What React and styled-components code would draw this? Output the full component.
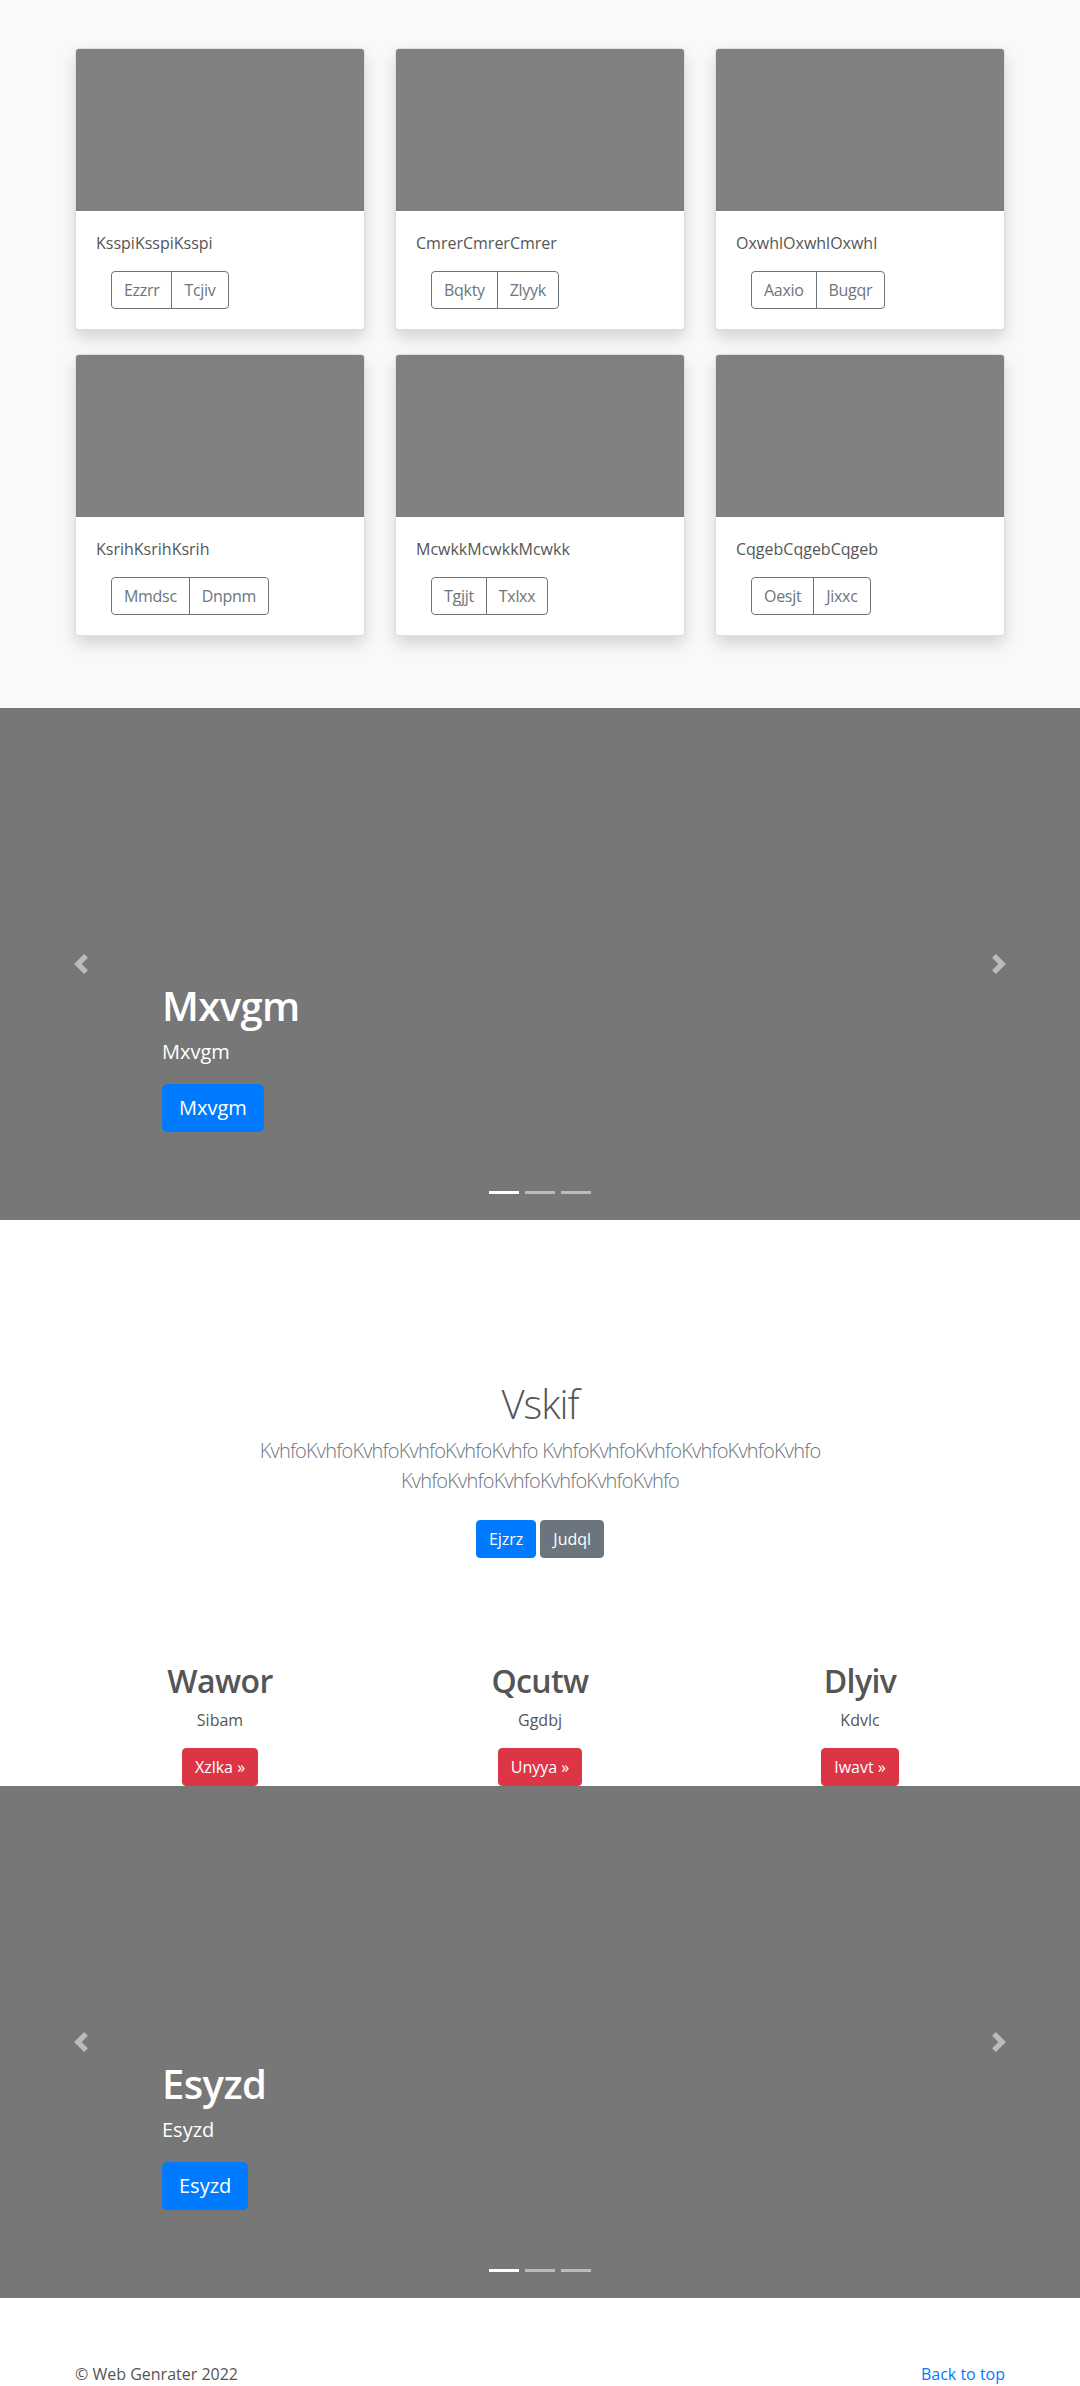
import React from 'react'
import styled, { createGlobalStyle } from 'styled-components'

const GlobalStyle = createGlobalStyle`
* { box-sizing: border-box; }
body {
  margin: 0;
  font-family: "Open Sans", "Noto Sans", "Liberation Sans", sans-serif;
  font-size: 16px;
  line-height: 1.5;
  color: #555;
  background: #fff;
}
`

const Album = styled.section`
background-color: #f8f9fa;
padding: 48px 0;
`
const Container = styled.div`
width: 100%;
max-width: ${props => props.narrow ? '640px' : '960px'};
margin: 0 auto;
padding: 0 15px;
`
const CardGrid = styled.div`
display: grid;
grid-template-columns: repeat(3, 290px);
column-gap: 30px;
row-gap: 24px;
padding-bottom: 24px;
`
const Card = styled.article`
display: flex;
flex-direction: column;
background: #fff;
border: 1px solid rgba(0, 0, 0, .125);
border-radius: 4px;
box-shadow: 0 8px 16px rgba(0, 0, 0, .15);
overflow: hidden;
`
const Thumb = styled.div`
height: 162px;
background-color: #808080;
`
const CardBody = styled.div`
padding: 20px;
`
const CardText = styled.p`
margin: 0 0 16px;
`
const BtnGroup = styled.div`
display: inline-flex;
margin-left: 15px;
`
const OutlineBtn = styled.button`
font: inherit;
letter-spacing: -0.3px;
color: #6c757d;
background: transparent;
border: 1px solid #6c757d;
padding: 6px 12px;
line-height: 1.5;
border-radius: 0;
&:first-child { border-radius: 4px 0 0 4px; }
&:last-child { border-radius: 0 4px 4px 0; margin-left: -1px; }
`

const CarouselBox = styled.div`
position: relative;
height: 512px;
background-color: #777;
margin-bottom: 64px;
overflow: hidden;
`
const Caption = styled.div`
position: absolute;
left: 15%;
right: 15%;
bottom: 48px;
padding: 20px 0;
color: #fff;
text-align: left;
`
const CaptionTitle = styled.h1`
margin: 0 0 8px;
font-size: 40px;
font-weight: 600;
letter-spacing: -0.6px;
line-height: 1.2;
`
const CaptionText = styled.p`
margin: 0 0 18px;
font-size: 20px;
line-height: 1.4;
`
const Btn = styled.a`
display: inline-block;
font-size: ${props => props.large ? '20px' : '16px'};
line-height: 1.5;
padding: ${props => props.large ? '8px 16px' : '6px 12px'};
border-radius: ${props => props.large ? '5px' : '4px'};
color: #fff;
text-decoration: none;
background-color: ${props => props.color};
border: 1px solid ${props => props.color};
`
const CaptionAction = styled.div`
margin-bottom: 20px;
display: flex;
`
const Control = styled.div`
position: absolute;
top: 0;
bottom: 0;
${props => props.side}: 0;
width: 15%;
display: flex;
align-items: center;
justify-content: center;
opacity: .5;
`
const Indicators = styled.ol`
position: absolute;
left: 0;
right: 0;
bottom: 0;
margin: 0 0 16px;
padding: 0;
list-style: none;
display: flex;
justify-content: center;
`
const Dot = styled.li`
width: 30px;
height: 3px;
margin: 0 3px;
box-sizing: content-box;
border-top: 10px solid transparent;
border-bottom: 10px solid transparent;
background-clip: padding-box;
background-color: #fff;
opacity: ${props => props.active ? 1 : .5};
`

const Jumbotron = styled.section`
padding: 96px 0;
text-align: center;
`
const JumboTitle = styled.h1`
margin: 0 0 8px;
font-size: 40px;
font-weight: 300;
letter-spacing: -1px;
line-height: 1.2;
`
const Lead = styled.p`
margin: 0 0 16px;
font-size: 20px;
font-weight: 300;
letter-spacing: -0.8px;
color: #6c757d;
`
const ButtonRow = styled.div`
display: flex;
justify-content: center;
gap: 4px;
padding: 8px 0;
`

const Marketing = styled.div`
display: grid;
grid-template-columns: repeat(3, 1fr);
margin: 0 -15px;
`
const Col = styled.div`
padding: 0 15px;
text-align: center;
`
const ColTitle = styled.h2`
margin: 0 0 8px;
font-size: 32px;
font-weight: 600;
letter-spacing: -0.6px;
line-height: 1.2;
`
const ColText = styled.p`
margin: 0 0 16px;
`

const Footer = styled.footer`
display: flex;
justify-content: space-between;
p { margin: 0 0 16px; }
a { color: #007bff; text-decoration: none; }
`

const Chevron = ({ dir }) => (
    <svg width="20" height="20" viewBox="0 0 8 8" fill="#fff">
        {dir === 'prev'
            ? <path d="M5.25 0l-4 4 4 4 1.5-1.5L4.25 4l2.5-2.5L5.25 0z" />
            : <path d="M2.75 0l-1.5 1.5L3.75 4l-2.5 2.5L2.75 8l4-4-4-4z" />}
    </svg>
)

const Carousel = ({ title }) => (
    <CarouselBox>
        <Caption>
            <CaptionTitle>{title}</CaptionTitle>
            <CaptionText>{title}</CaptionText>
            <CaptionAction>
                <Btn large color="#007bff" href="#">{title}</Btn>
            </CaptionAction>
        </Caption>
        <Control side="left"><Chevron dir="prev" /></Control>
        <Control side="right"><Chevron dir="next" /></Control>
        <Indicators>
            <Dot active />
            <Dot />
            <Dot />
        </Indicators>
    </CarouselBox>
)

const cards = [
    { text: 'KsspiKsspiKsspi', btns: ['Ezzrr', 'Tcjiv'] },
    { text: 'CmrerCmrerCmrer', btns: ['Bqkty', 'Zlyyk'] },
    { text: 'OxwhlOxwhlOxwhl', btns: ['Aaxio', 'Bugqr'] },
    { text: 'KsrihKsrihKsrih', btns: ['Mmdsc', 'Dnpnm'] },
    { text: 'McwkkMcwkkMcwkk', btns: ['Tgjjt', 'Txlxx'] },
    { text: 'CqgebCqgebCqgeb', btns: ['Oesjt', 'Jixxc'] },
]

const features = [
    { title: 'Wawor', text: 'Sibam', btn: 'Xzlka' },
    { title: 'Qcutw', text: 'Ggdbj', btn: 'Unyya' },
    { title: 'Dlyiv', text: 'Kdvlc', btn: 'Iwavt' },
]

const App = () => {
    const word = 'KvhfoKvhfoKvhfoKvhfoKvhfoKvhfo'
    return (
        <>
            <GlobalStyle />
            <Album>
                <Container>
                    <CardGrid>
                        {cards.map((card, idx) => (
                            <Card key={idx}>
                                <Thumb />
                                <CardBody>
                                    <CardText>{card.text}</CardText>
                                    <BtnGroup>
                                        {card.btns.map(b => <OutlineBtn key={b}>{b}</OutlineBtn>)}
                                    </BtnGroup>
                                </CardBody>
                            </Card>
                        ))}
                    </CardGrid>
                </Container>
            </Album>

            <Carousel title="Mxvgm" />

            <Jumbotron>
                <Container narrow>
                    <JumboTitle>Vskif</JumboTitle>
                    <Lead>{word} {word} {word}</Lead>
                    <ButtonRow>
                        <Btn color="#007bff" href="#">Ejzrz</Btn>
                        <Btn color="#6c757d" href="#">Judql</Btn>
                    </ButtonRow>
                </Container>
            </Jumbotron>

            <Container>
                <Marketing>
                    {features.map(f => (
                        <Col key={f.title}>
                            <ColTitle>{f.title}</ColTitle>
                            <ColText>{f.text}</ColText>
                            <Btn color="#dc3545" href="#">{f.btn} &raquo;</Btn>
                        </Col>
                    ))}
                </Marketing>
            </Container>

            <Carousel title="Esyzd" />

            <Container>
                <Footer>
                    <p>&copy; Web Genrater 2022</p>
                    <p><a href="#">Back to top</a></p>
                </Footer>
            </Container>
        </>
    )
}

export default App
